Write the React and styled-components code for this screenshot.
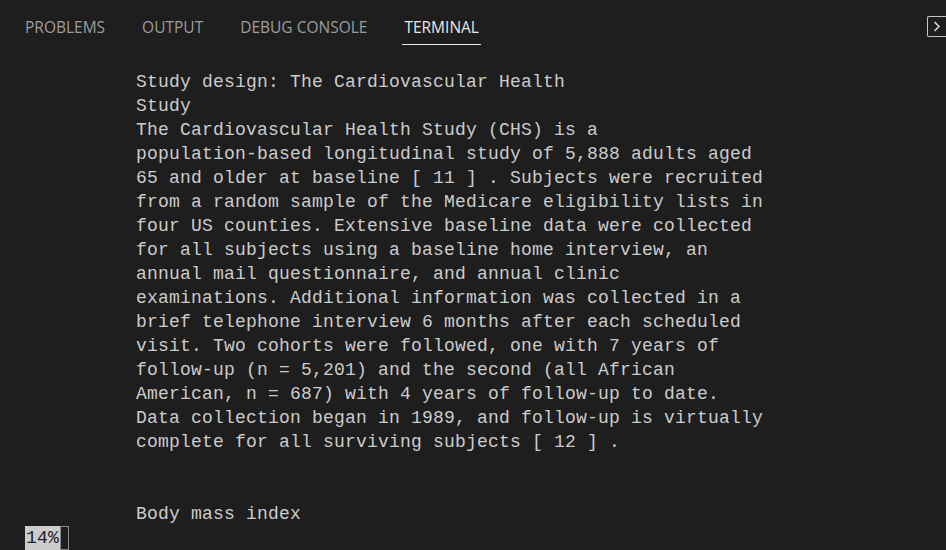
import React from "react";
import styled, { createGlobalStyle } from "styled-components";

const lines = [
  "Study design: The Cardiovascular Health",
  "Study",
  "The Cardiovascular Health Study (CHS) is a",
  "population-based longitudinal study of 5,888 adults aged",
  "65 and older at baseline [ 11 ] . Subjects were recruited",
  "from a random sample of the Medicare eligibility lists in",
  "four US counties. Extensive baseline data were collected",
  "for all subjects using a baseline home interview, an",
  "annual mail questionnaire, and annual clinic",
  "examinations. Additional information was collected in a",
  "brief telephone interview 6 months after each scheduled",
  "visit. Two cohorts were followed, one with 7 years of",
  "follow-up (n = 5,201) and the second (all African",
  "American, n = 687) with 4 years of follow-up to date.",
  "Data collection began in 1989, and follow-up is virtually",
  "complete for all surviving subjects [ 12 ] .",
  "",
  "",
  "Body mass index",
];

const tabs = ["PROBLEMS", "OUTPUT", "DEBUG CONSOLE", "TERMINAL"];

const GlobalStyle = createGlobalStyle`
  html, body {
    margin: 0;
    padding: 0;
    background: #1e1e1e;
    overflow: hidden;
  }
`;

const Panel = styled.div`
  width: 946px;
  height: 550px;
  background: #1e1e1e;
  display: flex;
  flex-direction: column;
  overflow: hidden;
`;

const TabBar = styled.div`
  height: 46px;
  display: flex;
  align-items: flex-start;
  justify-content: space-between;
  padding-left: 25px;
  box-sizing: border-box;
`;

const Tabs = styled.div`
  display: flex;
  gap: 37px;
`;

const Tab = styled.div`
  font-family: "Open Sans", "Noto Sans", sans-serif;
  font-size: 15.5px;
  line-height: 20px;
  padding-top: 17px;
  padding-bottom: 7px;
  color: ${({ $active }) => ($active ? "#e7e7e7" : "#9d9d9d")};
  border-bottom: 1px solid ${({ $active }) => ($active ? "#e7e7e7" : "transparent")};
  margin: 0 ${({ $active }) => ($active ? "-2px" : "0")};
  padding-left: ${({ $active }) => ($active ? "2px" : "0")};
  padding-right: ${({ $active }) => ($active ? "2px" : "0")};
`;

const ToggleButton = styled.div`
  margin-top: 16px;
  width: 23px;
  height: 21px;
  border: 1px solid #c5c5c5;
  border-right: none;
  border-radius: 2px 0 0 2px;
  box-sizing: border-box;
  display: flex;
  align-items: center;
  padding-left: 5px;
  margin-right: -4px;
`;

const Output = styled.div`
  flex: 1;
  padding-top: 25px;
  padding-left: 25px;
  font-family: "Liberation Mono", "DejaVu Sans Mono", monospace;
  font-size: 18px;
  letter-spacing: 0.2px;
  line-height: 24px;
  color: #cccccc;
  white-space: pre;
`;

const Line = styled.div`
  height: 24px;
  padding-left: 111px;
`;

const PromptLine = styled.div`
  height: 24px;
  display: flex;
  align-items: stretch;
`;

const Percent = styled.span`
  background: #cccccc;
  color: #1e1e1e;
  padding: 0 1px;
`;

const Cursor = styled.span`
  width: 9px;
  box-sizing: border-box;
  border: 1px solid #8a8a8a;
  background: #1e1e1e;
`;

export default function App() {
  return (
    <>
      <GlobalStyle />
      <Panel>
        <TabBar>
          <Tabs>
            {tabs.map((t) => (
              <Tab key={t} $active={t === "TERMINAL"}>
                {t}
              </Tab>
            ))}
          </Tabs>
          <ToggleButton>
            <svg width="8" height="11" viewBox="0 0 8 11">
              <path d="M1.5 1 L6 5.5 L1.5 10" fill="none" stroke="#d7d7d7" strokeWidth="1.6" />
            </svg>
          </ToggleButton>
        </TabBar>
        <Output>
          {lines.map((l, i) => (
            <Line key={i}>{l}</Line>
          ))}
          <PromptLine>
            <Percent>14%</Percent>
            <Cursor />
          </PromptLine>
        </Output>
      </Panel>
    </>
  );
}
